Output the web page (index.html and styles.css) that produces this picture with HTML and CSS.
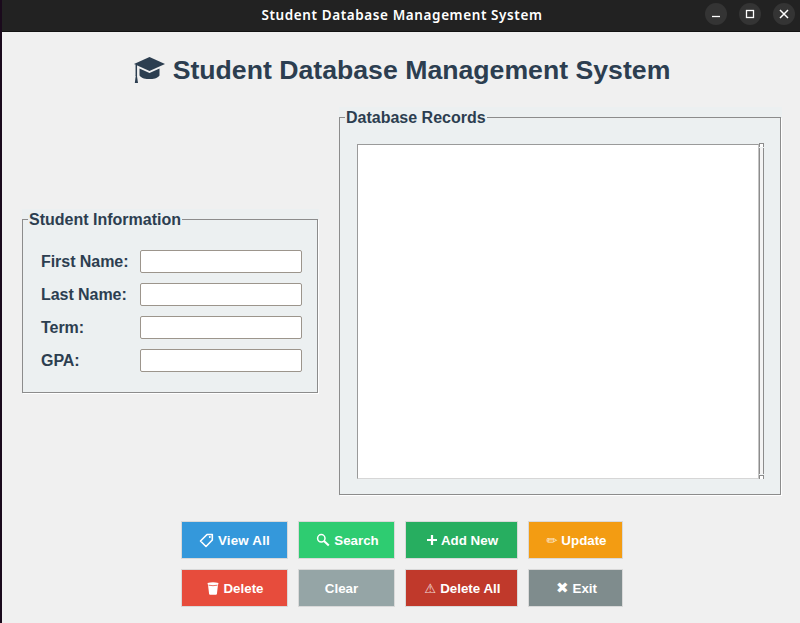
FILE: index.html
```html
<!DOCTYPE html>
<html lang="en">
<head>
<meta charset="utf-8">
<title>Student Database Management System</title>
<link rel="stylesheet" href="styles.css">
</head>
<body>
<div class="desk-edge"></div>
<div class="window">
  <header class="titlebar">
    <div></div>
    <div class="titlebar-text">Student Database Management System</div>
    <div class="controls">
      <span class="control"><svg width="22" height="22" viewBox="0 0 22 22"><path d="M7 13.500h8" stroke="#fff" stroke-width="1.300"/></svg></span>
      <span class="control"><svg width="22" height="22" viewBox="0 0 22 22"><rect x="7.500" y="7.500" width="7" height="7" fill="none" stroke="#fff" stroke-width="1.300"/></svg></span>
      <span class="control"><svg width="22" height="22" viewBox="0 0 22 22"><path d="M7 7l8 8M15 7l-8 8" stroke="#fff" stroke-width="1.500"/></svg></span>
    </div>
  </header>
  <main class="content">
    <h1 class="app-title">
      <svg class="cap" width="31" height="27" viewBox="0 0 31 27"><path d="M15.500 0 31 7 15.500 14 0 7z" fill="#2c3e50"/><path d="M5.500 11.500 15.500 16l10-4.500v7c-2 3-6.500 3.500-10 3.500s-8-.5-10-3.500z" fill="#2c3e50"/><path d="M2.300 8v11" stroke="#2c3e50" stroke-width="1.500"/><path d="M.8 26 1.800 18.500h1.100L4 26z" fill="#2c3e50"/></svg>
      <span>Student Database Management System</span>
    </h1>
    <div class="panels">
      <section class="group group-form">
        <fieldset class="frame">
          <legend class="legend">Student Information</legend>
          <div class="form">
            <label class="field-label">First Name:</label><input class="field" type="text">
            <label class="field-label">Last Name:</label><input class="field" type="text">
            <label class="field-label">Term:</label><input class="field" type="text">
            <label class="field-label">GPA:</label><input class="field" type="text">
          </div>
        </fieldset>
      </section>
      <section class="group group-records">
        <fieldset class="frame frame-records">
          <legend class="legend">Database Records</legend>
          <div class="records">
            <div class="listbox"></div>
            <div class="scrollbar"><span class="arrow"></span><span class="trough"></span><span class="arrow"></span></div>
          </div>
        </fieldset>
      </section>
    </div>
    <div class="actions">
      <button class="btn btn-view"><svg width="15" height="15" viewBox="0 0 15 15"><path d="M1.500 8 8 1.500h5.300V7L7 13.500z" fill="none" stroke="#fff" stroke-width="1.600" stroke-linejoin="round"/><circle cx="10.800" cy="4" r="1" fill="#fff"/></svg>View All</button>
      <button class="btn btn-search"><svg width="14" height="14" viewBox="0 0 14 14"><circle cx="5.300" cy="5.300" r="3.700" fill="none" stroke="#fff" stroke-width="1.500"/><path d="M8 8l4.800 4.500" stroke="#fff" stroke-width="2"/></svg>Search</button>
      <button class="btn btn-add"><svg width="10" height="10" viewBox="0 0 10 10"><path d="M5 0v10M0 5h10" stroke="#fff" stroke-width="2.200"/></svg>Add New</button>
      <button class="btn btn-update"><span class="glyph glyph-soft">✏</span>Update</button>
      <button class="btn btn-delete"><svg width="12" height="13" viewBox="0 0 12 13"><path d="M.5 1q5.500-1.500 11 0l-.6 2.500-1 8.500q-.1.800-1 .8H3.100q-.9 0-1-.8l-1-8.500z" fill="#fff"/><path d="M1.500 3.200q4.500 1 9 0" fill="none" stroke="#e74c3c" stroke-width=".8"/></svg>Delete</button>
      <button class="btn btn-clear">Clear</button>
      <button class="btn btn-delete-all"><span class="glyph glyph-soft">⚠</span>Delete All</button>
      <button class="btn btn-exit"><span class="glyph glyph-big">✖</span>Exit</button>
    </div>
  </main>
</div>
</body>
</html>
```
FILE: styles.css
```css
* { box-sizing: border-box; }
html, body { margin: 0; height: 100%; }
body {
  display: flex;
  width: 800px;
  height: 623px;
  overflow: hidden;
  font-family: "Liberation Sans", Arial, sans-serif;
  background: #f0f0f0;
}
.desk-edge { width: 2px; background: #1a0a1c; }
.window { flex: 1; display: flex; flex-direction: column; min-width: 0; }
.titlebar {
  height: 32px;
  display: grid;
  grid-template-columns: 1fr auto 1fr;
  align-items: center;
  background: #222222;
  border-bottom: 1px solid #121212;
  color: #fff;
}
.titlebar-text {
  font-family: "Noto Sans", sans-serif;
  font-size: 13.500px;
  font-weight: 600;
  letter-spacing: .6px;
  padding: 0 0 2px 2px;
}
.controls { display: flex; justify-content: flex-end; gap: 12px; padding-right: 5px; padding-bottom: 3px; }
.control { width: 22px; height: 22px; border-radius: 50%; background: #343434; display: flex; align-items: center; justify-content: center; }
.content { flex: 1; display: flex; flex-direction: column; }
.app-title {
  margin: 0;
  height: 75px;
  display: flex;
  align-items: center;
  justify-content: center;
  gap: 8px;
  font-size: 26.670px;
  font-weight: 700;
  color: #2c3e50;
  padding: 2px 0 0 2px;
}
.panels { display: flex; align-items: center; gap: 20px; padding-left: 20px; }
.group { background: #ecf0f1; padding: 0 1px 1px 0; }
.group-form { width: 297px; }
.group-records { width: 443px; }
.frame {
  margin: 0;
  padding: 0;
  min-width: 0;
  border: 1px solid #8c8c8c;
  box-shadow: 1px 1px 0 #fff;
}
.legend {
  margin-left: 5px;
  padding: 0 1px;
  font-size: 16px;
  font-weight: 700;
  line-height: 21px;
  color: #2c3e50;
  background: #ecf0f1;
}
.form {
  display: grid;
  grid-template-columns: 99px 162px;
  grid-auto-rows: 23px;
  row-gap: 10px;
  align-items: center;
  padding: 20px 0 20px 18px;
}
.field-label { font-size: 16px; font-weight: 700; color: #2c3e50; letter-spacing: -.05px; }
.field {
  width: 162px;
  height: 23px;
  margin: 0;
  border: 1px solid #9c958c;
  border-radius: 2px;
  background: #fff;
  outline: none;
}
.records { display: flex; height: 366px; padding: 16px 16px 15px 17px; }
.listbox {
  width: 403px;
  background: #fff;
  border: 1px solid #9a9a9a;
  border-bottom-color: #d6d6d6;
  border-right-color: #c4c4c4;
}
.scrollbar { width: 5px; display: flex; flex-direction: column; gap: 1px; margin-top: -1px; }
.arrow { height: 4px; border: 1px solid #8c8c8c; border-bottom: 0; background: #fff; }
.trough { flex: 1; border-left: 1px solid #8c8c8c; border-right: 1px solid #8c8c8c; background: #f4f4f4; }
.actions {
  display: grid;
  grid-template-columns: 107px 97px 113px 95px;
  grid-auto-rows: 38px;
  gap: 10px;
  justify-content: center;
  margin-top: 25px;
  padding-left: 2px;
}
.btn {
  display: flex;
  align-items: center;
  justify-content: center;
  gap: 4px;
  margin: 0;
  padding: 0 0 0 2px;
  border: 1px solid #d9d9d9;
  color: #fff;
  font-family: inherit;
  font-size: 13.330px;
  font-weight: 700;
}
.glyph { font-family: "DejaVu Sans", sans-serif; font-size: 13px; font-weight: 400; }
.glyph-soft { opacity: .8; }
.glyph-big { font-size: 15px; line-height: 1; }
.btn-view { background: #3498db; padding: 0; letter-spacing: .2px; }
.btn-search { background: #2ecc71; }
.btn-add { background: #27ae60; }
.btn-update { background: #f39c12; }
.btn-delete { background: #e74c3c; }
.btn-clear { background: #95a5a6; padding: 0 10px 0 0; }
.btn-delete-all { background: #c0392b; }
.btn-exit { background: #7f8c8d; }
```
